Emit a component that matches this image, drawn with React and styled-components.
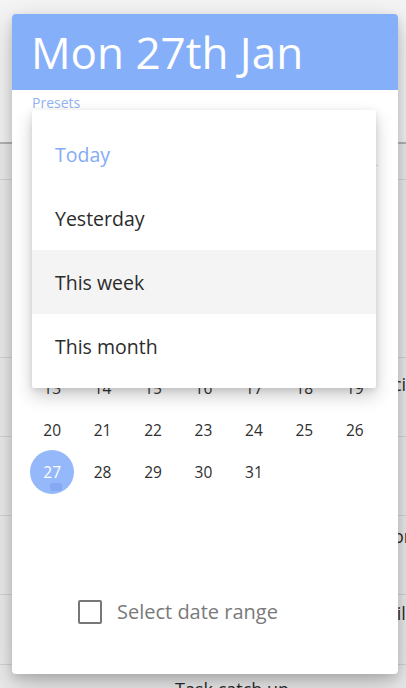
import React from "react";
import styled, { createGlobalStyle } from "styled-components";

const GlobalStyle = createGlobalStyle`
  html, body {
    margin: 0;
    padding: 0;
  }
  body {
    width: 406px;
    height: 688px;
    overflow: hidden;
    background: #ececec;
    font-family: "Open Sans", Lato, "Noto Sans", sans-serif;
  }
`;

const weeks = [
  [null, null, 1, 2, 3, 4, 5],
  [6, 7, 8, 9, 10, 11, 12],
  [13, 14, 15, 16, 17, 18, 19],
  [20, 21, 22, 23, 24, 25, 26],
  [27, 28, 29, 30, 31, null, null],
];

const weekdays = ["M", "T", "W", "T", "F", "S", "S"];
const presets = ["Today", "Yesterday", "This week", "This month"];

const rows = [
  { h: 36, text: "" },
  { h: 178, text: "" },
  { h: 79, text: "Special offers", offset: 362, top: 14 },
  { h: 79, text: "" },
  { h: 79, text: "Door", offset: 369, top: 8 },
  { h: 70, text: "Email", offset: 360, top: 6 },
  { h: 60, text: "Task catch up", offset: 175, top: 12 },
];

const App = () => {
  return (
    <>
      <GlobalStyle />
      <Page>
        <TopBar />
        {rows.map((row, i) => (
          <ListRow key={i} $h={row.h}>
            {row.text && (
              <RowText $offset={row.offset} $top={row.top}>
                {row.text}
              </RowText>
            )}
          </ListRow>
        ))}

        <Modal>
          <Header>
            <Title>Mon 27th Jan</Title>
          </Header>
          <Body>
            <PresetsLabel>Presets</PresetsLabel>
            <SelectField>Today</SelectField>
            <MonthNav>
              <NavArrow>‹</NavArrow>
              <MonthName>January 2020</MonthName>
              <NavArrow>›</NavArrow>
            </MonthNav>
            <Weekdays>
              {weekdays.map((d, i) => (
                <Weekday key={i}>{d}</Weekday>
              ))}
            </Weekdays>
            <Weeks>
              {weeks.map((week, wi) => (
                <Week key={wi}>
                  {week.map((day, di) => (
                    <DayCell key={di}>
                      {day && (
                        <Day $selected={day === 27}>
                          {day}
                          {day === 27 && <TodayMark />}
                        </Day>
                      )}
                    </DayCell>
                  ))}
                </Week>
              ))}
            </Weeks>
            <Footer>
              <CheckBox />
              <CheckLabel>Select date range</CheckLabel>
            </Footer>

            <Menu>
              {presets.map((p, i) => (
                <MenuItem key={p} $active={i === 0} $hover={i === 2}>
                  {p}
                </MenuItem>
              ))}
            </Menu>
          </Body>
        </Modal>
      </Page>
    </>
  );
};

export default App;

const Page = styled.div`
  position: relative;
  width: 406px;
  height: 688px;
  overflow: hidden;
`;

const TopBar = styled.div`
  height: 142px;
  background: #f4f4f4;
  border-bottom: 2px solid #b4b4b4;
`;

const ListRow = styled.div`
  position: relative;
  height: ${(p) => p.$h}px;
  box-sizing: border-box;
  border-bottom: 1px solid #d4d4d4;
  background: #ebebeb;
`;

const RowText = styled.div`
  padding-top: ${(p) => p.$top}px;
  padding-left: ${(p) => p.$offset}px;
  white-space: nowrap;
  font-size: 18px;
  color: #2b2b2b;
`;

const Modal = styled.div`
  position: absolute;
  left: 12px;
  top: 14px;
  width: 386px;
  height: 660px;
  display: flex;
  flex-direction: column;
  background: #fff;
  border-radius: 4px;
  box-shadow: 0 10px 28px rgba(0, 0, 0, 0.22), 0 4px 10px rgba(0, 0, 0, 0.12);
`;

const Header = styled.div`
  height: 76px;
  display: flex;
  align-items: center;
  padding-left: 19px;
  background: #86aff9;
  border-radius: 4px 4px 0 0;
`;

const Title = styled.h1`
  margin: 0;
  font-size: 44px;
  font-weight: 400;
  color: #fff;
`;

const Body = styled.div`
  position: relative;
  flex: 1;
  display: flex;
  flex-direction: column;
`;

const PresetsLabel = styled.div`
  margin-top: 6px;
  padding-left: 20px;
  font-size: 14px;
  line-height: 14px;
  color: #92b3f5;
`;

const SelectField = styled.div`
  height: 56px;
  margin: 0 20px;
  box-sizing: border-box;
  padding-top: 12px;
  font-size: 18px;
  color: #333;
  border-bottom: 1px solid #ddd;
`;

const MonthNav = styled.div`
  height: 64px;
  display: flex;
  align-items: center;
  justify-content: space-between;
  padding: 0 24px;
`;

const NavArrow = styled.span`
  font-size: 28px;
  color: #666;
`;

const MonthName = styled.span`
  font-size: 17px;
  color: #333;
`;

const Weekdays = styled.div`
  height: 52px;
  display: grid;
  grid-template-columns: repeat(7, 1fr);
  align-items: center;
  padding: 0 18px 0 15px;
`;

const Weekday = styled.span`
  text-align: center;
  font-size: 14px;
  color: #999;
`;

const Weeks = styled.div`
  display: flex;
  flex-direction: column;
  padding: 0 18px 0 15px;
`;

const Week = styled.div`
  height: 42px;
  display: grid;
  grid-template-columns: repeat(7, 1fr);
`;

const DayCell = styled.div`
  display: flex;
  align-items: center;
  justify-content: center;
`;

const Day = styled.div`
  position: relative;
  width: 44px;
  height: 44px;
  flex-shrink: 0;
  display: flex;
  align-items: center;
  justify-content: center;
  border-radius: 50%;
  font-size: 15.5px;
  color: ${(p) => (p.$selected ? "#fff" : "#2e2e2e")};
  background: ${(p) => (p.$selected ? "#95b8fa" : "transparent")};
`;

const TodayMark = styled.span`
  position: absolute;
  left: 20px;
  top: 33px;
  width: 12px;
  height: 8px;
  border-radius: 2px;
  background: #86a9f3;
`;

const Footer = styled.label`
  margin-top: auto;
  margin-bottom: 49px;
  display: flex;
  align-items: center;
  gap: 15px;
  padding-left: 66px;
`;

const CheckBox = styled.span`
  width: 24px;
  height: 24px;
  box-sizing: border-box;
  border: 2.5px solid #777;
  border-radius: 2px;
`;

const CheckLabel = styled.span`
  font-size: 20px;
  color: #7a7a7a;
`;

const Menu = styled.ul`
  position: absolute;
  left: 20px;
  top: 20px;
  width: 344px;
  margin: 0;
  padding: 12px 0 10px;
  list-style: none;
  background: #fff;
  border-radius: 2px;
  box-shadow: 0 8px 18px rgba(0, 0, 0, 0.2), 0 2px 6px rgba(0, 0, 0, 0.1);
`;

const MenuItem = styled.li`
  height: 64px;
  display: flex;
  align-items: center;
  padding-left: 23px;
  font-size: 19.5px;
  color: ${(p) => (p.$active ? "#84abf6" : "#2b2b2b")};
  background: ${(p) => (p.$hover ? "#f4f4f4" : "transparent")};
`;
